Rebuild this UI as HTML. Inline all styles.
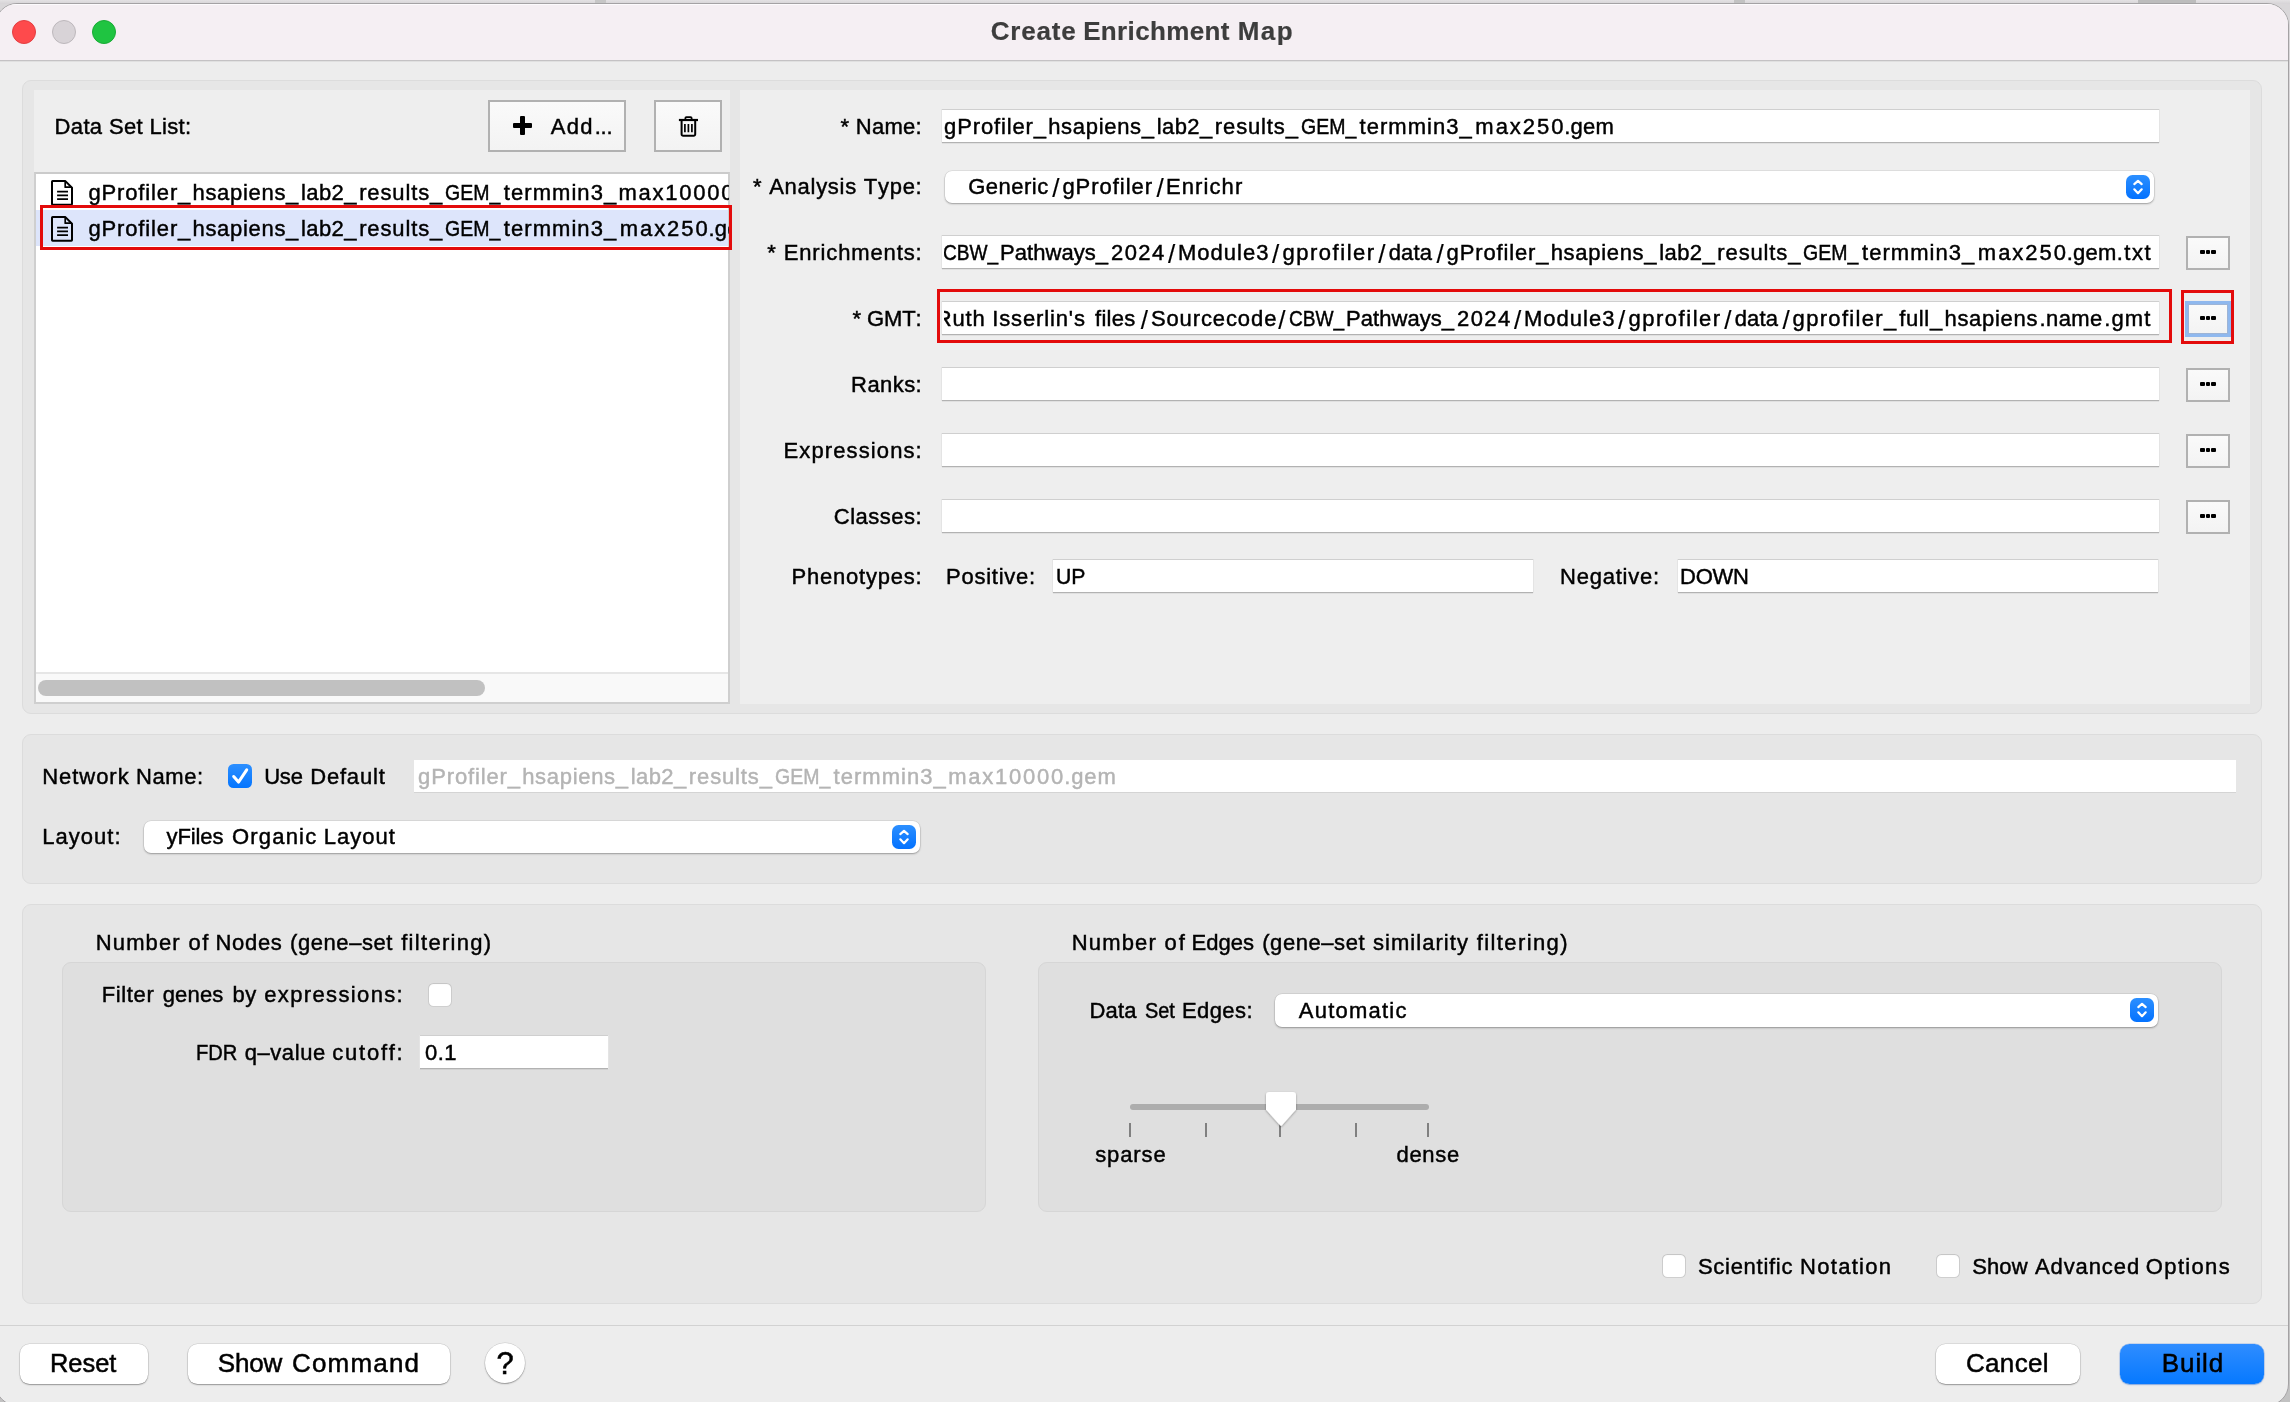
<!DOCTYPE html>
<html><head><meta charset="utf-8"><title>Create Enrichment Map</title>
<style>
html,body{margin:0;padding:0;}
body{width:2290px;height:1402px;overflow:hidden;position:relative;background:linear-gradient(#d9d7d9 0,#d6d4d6 60%,#c2c2c2 100%);font-family:"Liberation Sans",sans-serif;color:#000;font-size:22px;font-kerning:none;}
div,svg{position:absolute;box-sizing:border-box;}
#root{left:0;top:0;width:2290px;height:1402px;overflow:hidden;will-change:transform;}
.t{white-space:pre;line-height:normal;-webkit-text-stroke:0.45px #000;}
.clip{overflow:hidden;}
.win{left:-5px;top:3px;width:2294px;height:1403px;background:#ededed;border-radius:22px;overflow:hidden;border:1px solid #a4a2a4;}
.tbar{left:0;top:0;width:2292px;height:57px;background:#f5eff3;border-top:1px solid #fdfbfd;border-bottom:1px solid #c4c2c4;box-shadow:0 1px 0 #e0e0e0;}
.panel{background:#e6e6e6;border:1px solid #dcdcdc;border-radius:9px;}
.sub{background:#eeeeee;}
.sub2{background:#dfdfdf;border:1px solid #d6d6d6;border-radius:9px;}
.tf{background:#fff;border-top:1px solid #cfcfcf;border-bottom:1px solid #b2b2b2;box-shadow:0 1px 0 rgba(0,0,0,.06), -1px 0 0 #e4e4e4, 1px 0 0 #e4e4e4;}
.combo{background:#fff;border-radius:7px;box-shadow:0 1px 2px rgba(0,0,0,.3),0 0 0 .5px rgba(0,0,0,.1);}
.step{border-radius:6.5px;background:linear-gradient(#2c8fff,#0372ff);}
.bb{background:linear-gradient(#fafafa,#f3f3f3);border:2px solid #b1b1b1;}
.btn{background:#fff;border-radius:9.5px;box-shadow:0 1px 1.5px rgba(0,0,0,.32),0 0 0 .5px rgba(0,0,0,.14);}
.cb{background:#fff;border-radius:5.5px;box-shadow:0 0 0 1px rgba(0,0,0,.19) inset,0 1px 2px rgba(0,0,0,.06) inset;}
.red{border:3px solid #e30b0b;}
.dot{background:#000;border-radius:1px;}
</style></head>
<body><div id="root">
<div style="left:0;top:0;width:2290px;height:4px;background:linear-gradient(#e3e1e3,#d6d3d6);"></div>
<div style="left:595px;top:0;width:11px;height:3px;background:#c6c6c6;"></div>
<div style="left:1734px;top:0;width:11px;height:3px;background:#c2c2c2;"></div>
<div style="left:2138px;top:0;width:58px;height:3px;background:#bcbcbc;"></div>
<div class="win"><div class="tbar"></div></div>
<div style="left:12px;top:20px;width:24px;height:24px;border-radius:50%;background:#fe4a4c;border:1px solid #e33e41;"></div>
<div style="left:52px;top:20px;width:24px;height:24px;border-radius:50%;background:#d8d3d7;border:1px solid #bdb8bc;"></div>
<div style="left:92px;top:20px;width:24px;height:24px;border-radius:50%;background:#1fc441;border:1px solid #18ab35;"></div>
<div class="t" style="left:990.63px;top:15.77px;font-size:26px;-webkit-text-stroke-width:0.2px;letter-spacing:0.844px;color:#3d3d3d;-webkit-text-stroke-color:#3d3d3d;font-weight:700;">Create</div>
<div class="t" style="left:1083.16px;top:15.77px;font-size:26px;-webkit-text-stroke-width:0.2px;letter-spacing:0.370px;color:#3d3d3d;-webkit-text-stroke-color:#3d3d3d;font-weight:700;">Enrichment</div>
<div class="t" style="left:1237.76px;top:15.77px;font-size:26px;-webkit-text-stroke-width:0.2px;letter-spacing:1.403px;color:#3d3d3d;-webkit-text-stroke-color:#3d3d3d;font-weight:700;">Map</div>
<div class="panel" style="left:22px;top:80px;width:2240px;height:634px;"></div>
<div class="sub" style="left:34px;top:90px;width:696px;height:614px;"></div>
<div class="sub" style="left:740px;top:90px;width:1510px;height:614px;"></div>
<div class="t" style="left:54.60px;top:114.09px;letter-spacing:0.342px;">Data Set List:</div>
<div class="bb" style="left:488px;top:100px;width:138px;height:52px;"></div>
<div style="left:513px;top:123px;width:19px;height:5px;background:#000;border-radius:1px;"></div>
<div style="left:520px;top:116px;width:5px;height:19px;background:#000;border-radius:1px;"></div>
<div class="t" style="left:550.66px;top:114.09px;letter-spacing:1.308px;">Add</div>
<div class="t" style="left:594.69px;top:114.09px;letter-spacing:-0.210px;">...</div>
<div class="bb" style="left:654px;top:100px;width:68px;height:52px;"></div>
<svg style="left:672px;top:110px;" width="32" height="32" viewBox="672 110 32 32"><g fill="none" stroke="#000"><path d="M678.9 120h19.1" stroke-width="2.2"/><path d="M685.4 119.2v-1.1a1 1 0 0 1 1-1h4.2a1 1 0 0 1 1 1v1.1" stroke-width="1.8"/><path d="M681.6 121v13.3a1.5 1.5 0 0 0 1.5 1.5h10.6a1.5 1.5 0 0 0 1.5-1.5V121" stroke-width="2"/><path d="M684.9 124v8.2M688.4 124v8.2M691.9 124v8.2" stroke-width="1.7"/></g></svg>
<div class="" style="left:34px;top:172px;width:696px;height:532px;background:#fff;border:2px solid #cfcfcf;border-top-color:#cbcbcb;"></div>
<div class="" style="left:36px;top:210px;width:692px;height:36px;background:#dde5fb;"></div>
<svg style="left:46px;top:176px;" width="32" height="34" viewBox="46 176 32 34"><g fill="none" stroke="#000" stroke-linejoin="round"><path d="M52.6 181.1H65.4L72 187.7V204.1a.6 .6 0 0 1-.6 .6H52.6a.6 .6 0 0 1-.6-.6V181.7a.6 .6 0 0 1 .6-.6z" stroke-width="2"/><path d="M65.2 181.4V187.2H71.6" stroke-width="1.7"/><path d="M57.1 191.7H68M57.1 195.4H68M57.1 199.1H68" stroke-width="1.7"/></g></svg>
<svg style="left:46px;top:212px;" width="32" height="34" viewBox="46 176 32 34"><g fill="none" stroke="#000" stroke-linejoin="round"><path d="M52.6 181.1H65.4L72 187.7V204.1a.6 .6 0 0 1-.6 .6H52.6a.6 .6 0 0 1-.6-.6V181.7a.6 .6 0 0 1 .6-.6z" stroke-width="2"/><path d="M65.2 181.4V187.2H71.6" stroke-width="1.7"/><path d="M57.1 191.7H68M57.1 195.4H68M57.1 199.1H68" stroke-width="1.7"/></g></svg>
<div class="clip" style="left:36px;top:174px;width:693px;height:72px;">
<div class="t" style="left:52.38px;top:5.69px;letter-spacing:0.869px;">gProfiler_</div>
<div class="t" style="left:156.47px;top:5.69px;letter-spacing:0.697px;">hsapiens_</div>
<div class="t" style="left:265.02px;top:5.69px;letter-spacing:0.402px;">lab2_</div>
<div class="t" style="left:323.14px;top:5.69px;letter-spacing:0.869px;">results_</div>
<div class="t" style="left:409.12px;top:5.69px;transform:scaleX(0.8863);transform-origin:0 0;">GEM_</div>
<div class="t" style="left:467.87px;top:5.69px;letter-spacing:1.046px;">termmin3_</div>
<div class="t" style="left:582.44px;top:5.69px;letter-spacing:1.755px;">max10000</div>
<div class="t" style="left:698.49px;top:5.69px;letter-spacing:0.883px;">.gem</div>
<div class="t" style="left:52.38px;top:41.69px;letter-spacing:0.869px;">gProfiler_</div>
<div class="t" style="left:156.47px;top:41.69px;letter-spacing:0.697px;">hsapiens_</div>
<div class="t" style="left:265.02px;top:41.69px;letter-spacing:0.402px;">lab2_</div>
<div class="t" style="left:323.14px;top:41.69px;letter-spacing:0.869px;">results_</div>
<div class="t" style="left:409.12px;top:41.69px;transform:scaleX(0.8863);transform-origin:0 0;">GEM_</div>
<div class="t" style="left:467.87px;top:41.69px;letter-spacing:1.046px;">termmin3_</div>
<div class="t" style="left:583.64px;top:41.69px;letter-spacing:1.971px;">max250</div>
<div class="t" style="left:672.49px;top:41.69px;letter-spacing:0.217px;">.gem</div>
</div>
<div class="red" style="left:40px;top:205px;width:692px;height:45px;"></div>
<div class="" style="left:36px;top:672px;width:692px;height:30px;background:#f9f9f9;border-top:2px solid #e6e6e6;"></div>
<div class="" style="left:38px;top:680px;width:447px;height:16px;background:#c1c1c1;border-radius:8px;"></div>
<div class="t" style="left:840.55px;top:114.09px;letter-spacing:0.282px;">* Name:</div>
<div class="t" style="left:753.05px;top:174.09px;letter-spacing:0.729px;">* Analysis Type:</div>
<div class="t" style="left:767.25px;top:240.09px;letter-spacing:0.878px;">* Enrichments:</div>
<div class="t" style="left:852.45px;top:306.09px;letter-spacing:-0.080px;">* GMT:</div>
<div class="t" style="left:851.10px;top:372.09px;letter-spacing:0.429px;">Ranks:</div>
<div class="t" style="left:783.60px;top:438.09px;letter-spacing:1.107px;">Expressions:</div>
<div class="t" style="left:833.78px;top:504.09px;letter-spacing:0.510px;">Classes:</div>
<div class="t" style="left:791.60px;top:564.09px;letter-spacing:0.780px;">Phenotypes:</div>
<div class="tf" style="left:942px;top:109px;width:1216.5px;height:34px;"></div>
<div class="combo" style="left:945px;top:171px;width:1209px;height:32px;"></div>
<div class="step" style="left:2126px;top:175px;width:24px;height:24px;"></div>
<div class="tf" style="left:942px;top:235px;width:1216.5px;height:34px;"></div>
<div class="bb" style="left:2186px;top:236px;width:44px;height:34px;"></div>
<div class="dot" style="left:2200.2px;top:249.6px;width:4.6px;height:4.7px;"></div>
<div class="dot" style="left:2205.8px;top:249.6px;width:4.6px;height:4.7px;"></div>
<div class="dot" style="left:2211.4px;top:249.6px;width:4.6px;height:4.7px;"></div>
<div class="tf" style="left:942px;top:301px;width:1216.5px;height:34px;"></div>
<div class="bb" style="left:2187.5px;top:303.5px;width:40.0px;height:30.5px;box-shadow:0 0 0 3px #8fb8ee;border:1px solid #9db4d6;"></div>
<div class="dot" style="left:2200.2px;top:315.6px;width:4.6px;height:4.7px;"></div>
<div class="dot" style="left:2205.8px;top:315.6px;width:4.6px;height:4.7px;"></div>
<div class="dot" style="left:2211.4px;top:315.6px;width:4.6px;height:4.7px;"></div>
<div class="tf" style="left:942px;top:367px;width:1216.5px;height:34px;"></div>
<div class="bb" style="left:2186px;top:368px;width:44px;height:34px;"></div>
<div class="dot" style="left:2200.2px;top:381.6px;width:4.6px;height:4.7px;"></div>
<div class="dot" style="left:2205.8px;top:381.6px;width:4.6px;height:4.7px;"></div>
<div class="dot" style="left:2211.4px;top:381.6px;width:4.6px;height:4.7px;"></div>
<div class="tf" style="left:942px;top:433px;width:1216.5px;height:34px;"></div>
<div class="bb" style="left:2186px;top:434px;width:44px;height:34px;"></div>
<div class="dot" style="left:2200.2px;top:447.6px;width:4.6px;height:4.7px;"></div>
<div class="dot" style="left:2205.8px;top:447.6px;width:4.6px;height:4.7px;"></div>
<div class="dot" style="left:2211.4px;top:447.6px;width:4.6px;height:4.7px;"></div>
<div class="tf" style="left:942px;top:499px;width:1216.5px;height:34px;"></div>
<div class="bb" style="left:2186px;top:500px;width:44px;height:34px;"></div>
<div class="dot" style="left:2200.2px;top:513.6px;width:4.6px;height:4.7px;"></div>
<div class="dot" style="left:2205.8px;top:513.6px;width:4.6px;height:4.7px;"></div>
<div class="dot" style="left:2211.4px;top:513.6px;width:4.6px;height:4.7px;"></div>
<div class="red" style="left:937px;top:289px;width:1235px;height:54px;"></div>
<div class="red" style="left:2181px;top:290px;width:52.5px;height:54px;"></div>
<div class="tf" style="left:1053.4px;top:559px;width:479.29999999999995px;height:34px;"></div>
<div class="tf" style="left:1678.2px;top:559px;width:480.29999999999995px;height:34px;"></div>
<svg style="left:2126px;top:175px" width="24" height="24" viewBox="0 0 24 24"><path d="M8.3 9.05L12 5.8L15.7 9.05M8.3 14.3L12 18.15L15.7 14.3" fill="none" stroke="#fff" stroke-width="2.2" stroke-linecap="round" stroke-linejoin="round"/></svg>
<div class="t" style="left:944.08px;top:114.09px;letter-spacing:0.869px;">gProfiler_</div>
<div class="t" style="left:1048.17px;top:114.09px;letter-spacing:0.697px;">hsapiens_</div>
<div class="t" style="left:1156.72px;top:114.09px;letter-spacing:0.402px;">lab2_</div>
<div class="t" style="left:1214.84px;top:114.09px;letter-spacing:0.869px;">results_</div>
<div class="t" style="left:1300.82px;top:114.09px;transform:scaleX(0.8863);transform-origin:0 0;">GEM_</div>
<div class="t" style="left:1359.57px;top:114.09px;letter-spacing:1.046px;">termmin3_</div>
<div class="t" style="left:1475.34px;top:114.09px;letter-spacing:1.971px;">max250</div>
<div class="t" style="left:1564.19px;top:114.09px;letter-spacing:0.217px;">.gem</div>
<div class="t" style="left:968.19px;top:174.09px;letter-spacing:0.492px;">Generic</div>
<div class="t" style="left:1052.34px;top:173.27px;font-size:26px;-webkit-text-stroke-width:0.15px;">/</div>
<div class="t" style="left:1062.38px;top:174.09px;letter-spacing:0.971px;">gProfiler</div>
<div class="t" style="left:1156.44px;top:173.27px;font-size:26px;-webkit-text-stroke-width:0.15px;">/</div>
<div class="t" style="left:1165.90px;top:174.09px;letter-spacing:1.114px;">Enrichr</div>
<div class="clip" style="left:943.8px;top:237px;width:1214.2px;height:30px;">
<div class="t" style="left:-1.07px;top:3.09px;transform:scaleX(0.8693);transform-origin:0 0;">CBW_</div>
<div class="t" style="left:56.20px;top:3.09px;letter-spacing:0.055px;">Pathways_</div>
<div class="t" style="left:167.29px;top:3.09px;letter-spacing:1.403px;">2024</div>
<div class="t" style="left:224.14px;top:2.27px;font-size:26px;-webkit-text-stroke-width:0.15px;">/</div>
<div class="t" style="left:234.10px;top:3.09px;letter-spacing:1.030px;">Module3</div>
<div class="t" style="left:328.14px;top:2.27px;font-size:26px;-webkit-text-stroke-width:0.15px;">/</div>
<div class="t" style="left:338.68px;top:3.09px;letter-spacing:1.526px;">gprofiler</div>
<div class="t" style="left:434.54px;top:2.27px;font-size:26px;-webkit-text-stroke-width:0.15px;">/</div>
<div class="t" style="left:444.88px;top:3.09px;letter-spacing:0.135px;">data</div>
<div class="t" style="left:492.59px;top:2.27px;font-size:26px;-webkit-text-stroke-width:0.15px;">/</div>
<div class="t" style="left:502.78px;top:3.09px;letter-spacing:0.869px;">gProfiler_</div>
<div class="t" style="left:606.87px;top:3.09px;letter-spacing:0.697px;">hsapiens_</div>
<div class="t" style="left:715.42px;top:3.09px;letter-spacing:0.402px;">lab2_</div>
<div class="t" style="left:773.54px;top:3.09px;letter-spacing:0.869px;">results_</div>
<div class="t" style="left:859.52px;top:3.09px;transform:scaleX(0.8863);transform-origin:0 0;">GEM_</div>
<div class="t" style="left:918.27px;top:3.09px;letter-spacing:1.046px;">termmin3_</div>
<div class="t" style="left:1034.04px;top:3.09px;letter-spacing:1.971px;">max250</div>
<div class="t" style="left:1122.89px;top:3.09px;letter-spacing:0.217px;">.gem</div>
<div class="t" style="left:1172.89px;top:3.09px;letter-spacing:1.544px;">.txt</div>
</div>
<div class="clip" style="left:943.8px;top:303px;width:1214.2px;height:30px;">
<div class="t" style="left:-8.00px;top:3.09px;letter-spacing:0.788px;">Ruth</div>
<div class="t" style="left:48.37px;top:3.09px;letter-spacing:0.871px;">Isserlin's</div>
<div class="t" style="left:151.29px;top:3.09px;letter-spacing:0.271px;">files</div>
<div class="t" style="left:196.94px;top:2.27px;font-size:26px;-webkit-text-stroke-width:0.15px;">/</div>
<div class="t" style="left:207.10px;top:3.09px;letter-spacing:0.896px;">Sourcecode</div>
<div class="t" style="left:334.54px;top:2.27px;font-size:26px;-webkit-text-stroke-width:0.15px;">/</div>
<div class="t" style="left:344.93px;top:3.09px;transform:scaleX(0.8693);transform-origin:0 0;">CBW_</div>
<div class="t" style="left:402.20px;top:3.09px;letter-spacing:0.055px;">Pathways_</div>
<div class="t" style="left:513.29px;top:3.09px;letter-spacing:1.403px;">2024</div>
<div class="t" style="left:570.14px;top:2.27px;font-size:26px;-webkit-text-stroke-width:0.15px;">/</div>
<div class="t" style="left:580.10px;top:3.09px;letter-spacing:1.030px;">Module3</div>
<div class="t" style="left:674.14px;top:2.27px;font-size:26px;-webkit-text-stroke-width:0.15px;">/</div>
<div class="t" style="left:684.68px;top:3.09px;letter-spacing:1.526px;">gprofiler</div>
<div class="t" style="left:780.54px;top:2.27px;font-size:26px;-webkit-text-stroke-width:0.15px;">/</div>
<div class="t" style="left:790.88px;top:3.09px;letter-spacing:0.135px;">data</div>
<div class="t" style="left:838.59px;top:2.27px;font-size:26px;-webkit-text-stroke-width:0.15px;">/</div>
<div class="t" style="left:848.78px;top:3.09px;letter-spacing:1.329px;">gprofiler_</div>
<div class="t" style="left:955.39px;top:3.09px;letter-spacing:0.652px;">full_</div>
<div class="t" style="left:1000.67px;top:3.09px;letter-spacing:0.708px;">hsapiens</div>
<div class="t" style="left:1095.59px;top:3.09px;letter-spacing:0.460px;">.name</div>
<div class="t" style="left:1160.39px;top:3.09px;letter-spacing:1.161px;">.gmt</div>
</div>
<div class="t" style="left:946.10px;top:564.09px;letter-spacing:0.734px;">Positive:</div>
<div class="t" style="left:1055.76px;top:564.09px;transform:scaleX(0.9638);transform-origin:0 0;">UP</div>
<div class="t" style="left:1560.10px;top:564.09px;letter-spacing:0.759px;">Negative:</div>
<div class="t" style="left:1680.10px;top:564.09px;letter-spacing:-0.285px;">DOWN</div>
<div class="panel" style="left:22px;top:734px;width:2240px;height:150px;"></div>
<div class="t" style="left:42.20px;top:764.09px;letter-spacing:0.965px;">Network</div>
<div class="t" style="left:136.00px;top:764.09px;letter-spacing:0.579px;">Name:</div>
<div class="" style="left:228px;top:764px;width:24px;height:24px;border-radius:5.5px;background:linear-gradient(#2c8fff,#0475ff);"></div>
<svg style="left:228px;top:764px" width="24" height="24" viewBox="0 0 24 24"><path d="M5.7 12.5L10.5 18.1L18.7 5.8" fill="none" stroke="#fff" stroke-width="3" stroke-linecap="round" stroke-linejoin="round"/></svg>
<div class="t" style="left:264.20px;top:764.09px;letter-spacing:-0.224px;">Use</div>
<div class="t" style="left:310.20px;top:764.09px;letter-spacing:0.810px;">Default</div>
<div class="" style="left:414px;top:760px;width:1822px;height:33px;background:#fff;border-bottom:1px solid #d4d4d4;"></div>
<div class="t" style="left:418.08px;top:764.09px;letter-spacing:0.869px;color:#b4b4b4;-webkit-text-stroke-color:#b4b4b4;">gProfiler_</div>
<div class="t" style="left:522.17px;top:764.09px;letter-spacing:0.697px;color:#b4b4b4;-webkit-text-stroke-color:#b4b4b4;">hsapiens_</div>
<div class="t" style="left:630.72px;top:764.09px;letter-spacing:0.402px;color:#b4b4b4;-webkit-text-stroke-color:#b4b4b4;">lab2_</div>
<div class="t" style="left:688.84px;top:764.09px;letter-spacing:0.869px;color:#b4b4b4;-webkit-text-stroke-color:#b4b4b4;">results_</div>
<div class="t" style="left:774.82px;top:764.09px;color:#b4b4b4;-webkit-text-stroke-color:#b4b4b4;transform:scaleX(0.8863);transform-origin:0 0;">GEM_</div>
<div class="t" style="left:833.57px;top:764.09px;letter-spacing:1.046px;color:#b4b4b4;-webkit-text-stroke-color:#b4b4b4;">termmin3_</div>
<div class="t" style="left:948.14px;top:764.09px;letter-spacing:1.755px;color:#b4b4b4;-webkit-text-stroke-color:#b4b4b4;">max10000</div>
<div class="t" style="left:1064.19px;top:764.09px;letter-spacing:0.883px;color:#b4b4b4;-webkit-text-stroke-color:#b4b4b4;">.gem</div>
<div class="t" style="left:42.20px;top:824.39px;letter-spacing:1.025px;">Layout:</div>
<div class="combo" style="left:144px;top:821px;width:776px;height:32px;"></div>
<div class="step" style="left:891.5px;top:824.8px;width:24.0px;height:24.0px;"></div>
<svg style="left:891.5px;top:824.8px" width="24" height="24" viewBox="0 0 24 24"><path d="M8.3 9.05L12 5.8L15.7 9.05M8.3 14.3L12 18.15L15.7 14.3" fill="none" stroke="#fff" stroke-width="2.2" stroke-linecap="round" stroke-linejoin="round"/></svg>
<div class="t" style="left:166.55px;top:824.39px;letter-spacing:-0.120px;">yFiles</div>
<div class="t" style="left:231.96px;top:824.39px;letter-spacing:1.198px;">Organic</div>
<div class="t" style="left:323.80px;top:824.39px;letter-spacing:1.002px;">Layout</div>
<div class="panel" style="left:22px;top:904px;width:2240px;height:400px;"></div>
<div class="t" style="left:95.80px;top:930.09px;letter-spacing:1.125px;">Number</div>
<div class="t" style="left:188.38px;top:930.09px;letter-spacing:1.644px;">of</div>
<div class="t" style="left:215.50px;top:930.09px;letter-spacing:0.676px;">Nodes</div>
<div class="t" style="left:290.04px;top:930.09px;letter-spacing:0.572px;">(gene–set</div>
<div class="t" style="left:401.19px;top:930.09px;letter-spacing:1.303px;">filtering)</div>
<div class="sub2" style="left:62px;top:962px;width:924px;height:250px;"></div>
<div class="t" style="left:101.80px;top:982.39px;letter-spacing:0.616px;">Filter</div>
<div class="t" style="left:162.68px;top:982.39px;letter-spacing:0.169px;">genes</div>
<div class="t" style="left:232.38px;top:982.39px;letter-spacing:0.526px;">by</div>
<div class="t" style="left:264.27px;top:982.39px;letter-spacing:1.358px;">expressions:</div>
<div class="cb" style="left:428px;top:983px;width:24px;height:24px;"></div>
<div class="t" style="left:195.95px;top:1040.29px;transform:scaleX(0.9153);transform-origin:0 0;">FDR</div>
<div class="t" style="left:244.68px;top:1040.29px;letter-spacing:0.573px;">q–value</div>
<div class="t" style="left:332.37px;top:1040.29px;letter-spacing:1.737px;">cutoff:</div>
<div class="tf" style="left:420px;top:1035px;width:188px;height:34px;"></div>
<div class="t" style="left:424.94px;top:1040.29px;letter-spacing:0.475px;">0.1</div>
<div class="t" style="left:1071.80px;top:930.09px;letter-spacing:1.145px;">Number</div>
<div class="t" style="left:1164.38px;top:930.09px;letter-spacing:2.244px;">of</div>
<div class="t" style="left:1191.60px;top:930.09px;letter-spacing:-0.020px;">Edges</div>
<div class="t" style="left:1262.24px;top:930.09px;letter-spacing:0.559px;">(gene–set</div>
<div class="t" style="left:1372.99px;top:930.09px;letter-spacing:1.045px;">similarity</div>
<div class="t" style="left:1476.79px;top:930.09px;letter-spacing:1.392px;">filtering)</div>
<div class="sub2" style="left:1038px;top:962px;width:1184px;height:250px;"></div>
<div class="t" style="left:1089.40px;top:997.89px;letter-spacing:0.211px;">Data</div>
<div class="t" style="left:1144.80px;top:997.89px;transform:scaleX(0.9039);transform-origin:0 0;">Set</div>
<div class="t" style="left:1181.90px;top:997.89px;letter-spacing:0.424px;">Edges:</div>
<div class="combo" style="left:1275px;top:994px;width:883px;height:33px;"></div>
<div class="step" style="left:2130px;top:998px;width:24px;height:24px;"></div>
<svg style="left:2130px;top:998px" width="24" height="24" viewBox="0 0 24 24"><path d="M8.3 9.05L12 5.8L15.7 9.05M8.3 14.3L12 18.15L15.7 14.3" fill="none" stroke="#fff" stroke-width="2.2" stroke-linecap="round" stroke-linejoin="round"/></svg>
<div class="t" style="left:1298.86px;top:997.89px;letter-spacing:1.213px;">Automatic</div>
<div class="" style="left:1130.3px;top:1104.2px;width:299.0px;height:5.399999999999864px;background:#adadad;border-radius:3px;"></div>
<div class="" style="left:1128.8px;top:1123px;width:2.0px;height:13.5px;background:#808080;"></div>
<div class="" style="left:1205.1px;top:1123px;width:2.0px;height:13.5px;background:#808080;"></div>
<div class="" style="left:1279px;top:1123px;width:2px;height:13.5px;background:#808080;"></div>
<div class="" style="left:1355px;top:1123px;width:2px;height:13.5px;background:#808080;"></div>
<div class="" style="left:1427.1px;top:1123px;width:2.0px;height:13.5px;background:#808080;"></div>
<svg style="left:1260px;top:1086px" width="42" height="46" viewBox="0 0 42 46"><defs><filter id="sh" x="-30%" y="-30%" width="160%" height="160%"><feDropShadow dx="0" dy="1" stdDeviation="1.2" flood-color="#000" flood-opacity=".35"/></filter></defs><path d="M9 6h24a3 3 0 0 1 3 3v14.5L21.8 39.5a1.2 1.2 0 0 1-1.6 0L6 23.5V9a3 3 0 0 1 3-3z" fill="#fff" filter="url(#sh)"/></svg>
<div class="t" style="left:1095.19px;top:1141.79px;letter-spacing:0.892px;">sparse</div>
<div class="t" style="left:1396.48px;top:1141.79px;letter-spacing:0.715px;">dense</div>
<div class="cb" style="left:1662px;top:1254px;width:24px;height:24px;"></div>
<div class="t" style="left:1697.90px;top:1253.79px;letter-spacing:0.727px;">Scientific</div>
<div class="t" style="left:1800.00px;top:1253.79px;letter-spacing:1.299px;">Notation</div>
<div class="cb" style="left:1936px;top:1254px;width:24px;height:24px;"></div>
<div class="t" style="left:1972.20px;top:1253.79px;letter-spacing:0.138px;">Show</div>
<div class="t" style="left:2034.96px;top:1253.79px;letter-spacing:0.901px;">Advanced</div>
<div class="t" style="left:2145.86px;top:1253.79px;letter-spacing:1.336px;">Options</div>
<div style="left:0;top:1325px;width:2288px;height:1px;background:#d2d2d2;"></div>
<div class="btn" style="left:20px;top:1344px;width:128px;height:40px;"></div>
<div class="t" style="left:49.82px;top:1348.47px;font-size:26px;-webkit-text-stroke-width:0.5px;transform:scaleX(0.9772);transform-origin:0 0;">Reset</div>
<div class="btn" style="left:188px;top:1344px;width:262px;height:40px;"></div>
<div class="t" style="left:217.72px;top:1348.47px;font-size:26px;-webkit-text-stroke-width:0.5px;letter-spacing:-0.140px;">Show</div>
<div class="t" style="left:291.98px;top:1348.47px;font-size:26px;-webkit-text-stroke-width:0.5px;letter-spacing:1.194px;">Command</div>
<div class="btn" style="left:485px;top:1343px;width:40px;height:40px;border-radius:50%;"></div>
<div class="t" style="left:496.62px;top:1346.35px;font-size:31px;-webkit-text-stroke-width:0.5px;">?</div>
<div class="btn" style="left:1936px;top:1344px;width:144px;height:40px;"></div>
<div class="t" style="left:1965.88px;top:1348.27px;font-size:26px;-webkit-text-stroke-width:0.5px;letter-spacing:0.365px;">Cancel</div>
<div class="btn" style="left:2120px;top:1344px;width:144px;height:40px;background:linear-gradient(#2f8dff,#0679ff);box-shadow:0 1px 1.5px rgba(0,80,200,.35),0 0 0 .5px rgba(0,90,220,.3);"></div>
<div class="t" style="left:2161.87px;top:1348.27px;font-size:26px;-webkit-text-stroke-width:0.5px;letter-spacing:0.874px;">Build</div>
</div></body></html>
